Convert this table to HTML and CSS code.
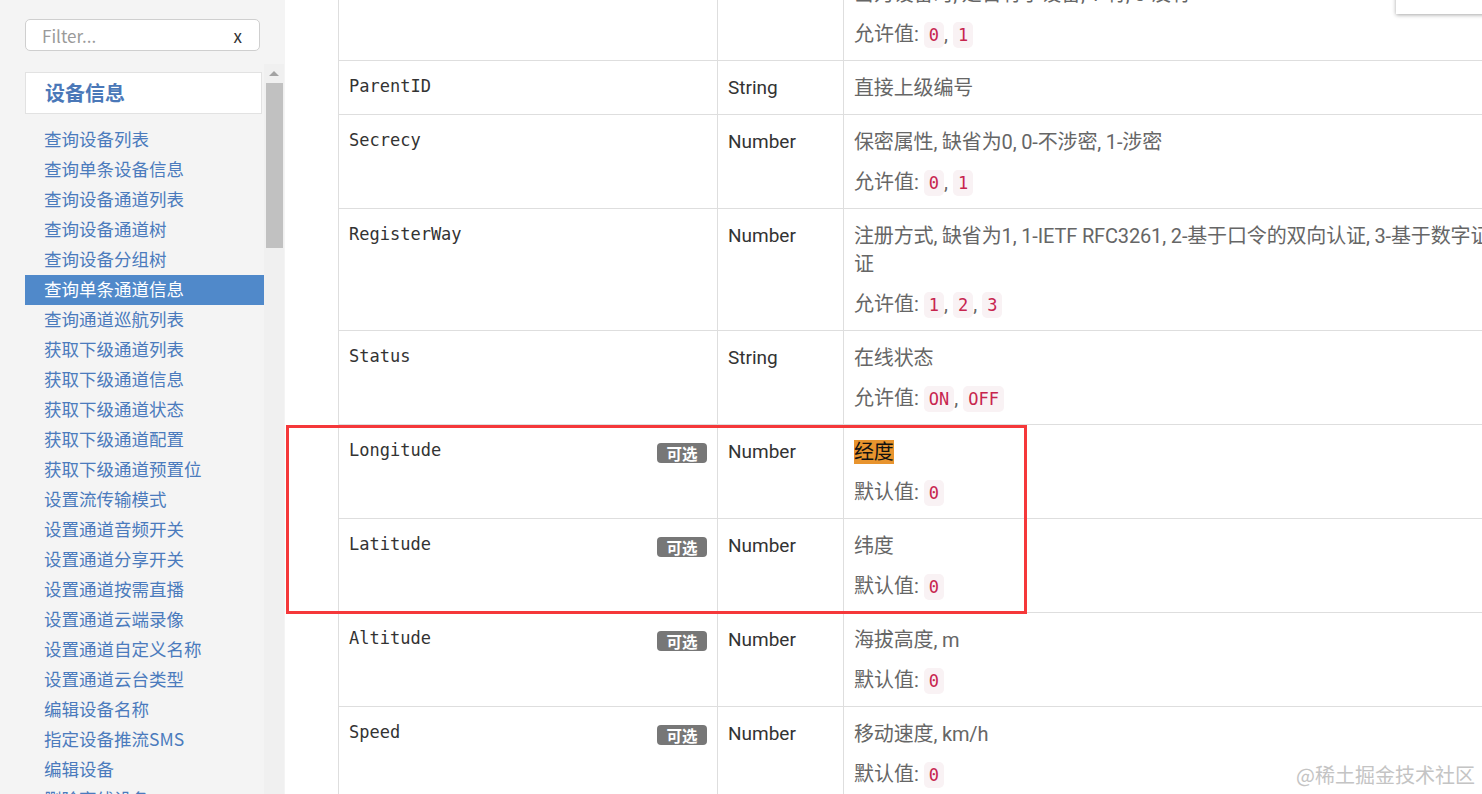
FILE: index.html
```html
<!DOCTYPE html>
<html lang="zh-CN">
<head>
<meta charset="utf-8">
<title>API 文档 - 设备信息</title>
<link rel="stylesheet" href="styles.css">
</head>
<body>
<div class="page">
  <aside class="sidebar">
    <div class="filter">
      <span class="filter-ph">Filter...</span>
      <span class="filter-x">x</span>
    </div>
    <div class="nav-wrap">
      <nav class="nav">
        <div class="nav-header">设备信息</div>
        <ul class="nav-list">
          <li><a>查询设备列表</a></li>
          <li><a>查询单条设备信息</a></li>
          <li><a>查询设备通道列表</a></li>
          <li><a>查询设备通道树</a></li>
          <li><a>查询设备分组树</a></li>
          <li class="active"><a>查询单条通道信息</a></li>
          <li><a>查询通道巡航列表</a></li>
          <li><a>获取下级通道列表</a></li>
          <li><a>获取下级通道信息</a></li>
          <li><a>获取下级通道状态</a></li>
          <li><a>获取下级通道配置</a></li>
          <li><a>获取下级通道预置位</a></li>
          <li><a>设置流传输模式</a></li>
          <li><a>设置通道音频开关</a></li>
          <li><a>设置通道分享开关</a></li>
          <li><a>设置通道按需直播</a></li>
          <li><a>设置通道云端录像</a></li>
          <li><a>设置通道自定义名称</a></li>
          <li><a>设置通道云台类型</a></li>
          <li><a>编辑设备名称</a></li>
          <li><a>指定设备推流SMS</a></li>
          <li><a>编辑设备</a></li>
          <li><a>删除离线设备</a></li>
        </ul>
      </nav>
      <div class="scrollbar">
        <div class="sb-up"><span class="sb-arrow"></span></div>
        <div class="sb-thumb"></div>
      </div>
    </div>
  </aside>

  <main class="content">
    <table class="params">
      <colgroup>
        <col class="c-name">
        <col class="c-type">
        <col class="c-desc">
      </colgroup>
      <tbody>
        <tr>
          <td><div class="field">Parental</div></td>
          <td class="type">Number</td>
          <td><p class="desc">当为设备时, 是否有子设备, 1-有, 0-没有</p><p class="allowed">允许值: <code>0</code>, <code>1</code></p></td>
        </tr>
        <tr>
          <td><div class="field">ParentID</div></td>
          <td class="type">String</td>
          <td><p class="desc">直接上级编号</p></td>
        </tr>
        <tr>
          <td><div class="field">Secrecy</div></td>
          <td class="type">Number</td>
          <td><p class="desc">保密属性, 缺省为0, 0-不涉密, 1-涉密</p><p class="allowed">允许值: <code>0</code>, <code>1</code></p></td>
        </tr>
        <tr>
          <td><div class="field">RegisterWay</div></td>
          <td class="type">Number</td>
          <td><p class="desc">注册方式, 缺省为1, 1-IETF RFC3261, 2-基于口令的双向认证, 3-基于数字证书的双向认<br>证</p><p class="allowed">允许值: <code>1</code>, <code>2</code>, <code>3</code></p></td>
        </tr>
        <tr>
          <td><div class="field">Status</div></td>
          <td class="type">String</td>
          <td><p class="desc">在线状态</p><p class="allowed">允许值: <code>ON</code>, <code>OFF</code></p></td>
        </tr>
        <tr>
          <td><span class="badge">可选</span><div class="field">Longitude</div></td>
          <td class="type">Number</td>
          <td><p class="desc"><span class="mark">经度</span></p><p class="allowed">默认值: <code>0</code></p></td>
        </tr>
        <tr>
          <td><span class="badge">可选</span><div class="field">Latitude</div></td>
          <td class="type">Number</td>
          <td><p class="desc">纬度</p><p class="allowed">默认值: <code>0</code></p></td>
        </tr>
        <tr>
          <td><span class="badge">可选</span><div class="field">Altitude</div></td>
          <td class="type">Number</td>
          <td><p class="desc">海拔高度, m</p><p class="allowed">默认值: <code>0</code></p></td>
        </tr>
        <tr>
          <td><span class="badge">可选</span><div class="field">Speed</div></td>
          <td class="type">Number</td>
          <td><p class="desc">移动速度, km/h</p><p class="allowed">默认值: <code>0</code></p></td>
        </tr>
      </tbody>
    </table>
    <div class="popup"></div>
    <div class="red-box"></div>
  </main>

  <div class="watermark">@稀土掘金技术社区</div>
</div>
</body>
</html>
```

FILE: styles.css
```css
html, body {
  margin: 0;
  padding: 0;
  overflow: hidden;
  background: #fff;
}

body {
  font-family: "Noto Sans CJK SC", "Noto Sans", sans-serif;
  color: #333;
}

.page {
  position: relative;
  display: flex;
  width: 1482px;
  height: 794px;
  overflow: hidden;
}

/* ---------- sidebar ---------- */
.sidebar {
  flex: 0 0 285px;
  height: 794px;
  background: #f4f4f4;
  overflow: hidden;
}

.filter {
  box-sizing: border-box;
  margin: 19px 0 0 25px;
  width: 235px;
  height: 32px;
  padding: 0 17px 0 16px;
  border: 1px solid #cfcfcf;
  border-radius: 5px;
  background: #fff;
  display: flex;
  align-items: center;
  justify-content: space-between;
  font-size: 17px;
}

.filter-ph {
  color: #9a9a9a;
}

.filter-x {
  color: #333;
}

.nav-wrap {
  margin-top: 13px;
  padding-left: 25px;
  display: flex;
  align-items: flex-start;
}

.nav {
  width: 239px;
  padding-top: 8px;
}

.nav-header {
  box-sizing: border-box;
  width: 237px;
  height: 42px;
  border: 1px solid #e2e2e2;
  background: #fff;
  padding-left: 19px;
  font-size: 20px;
  font-weight: 700;
  line-height: 40px;
  color: #4a78b8;
}

.nav-list {
  list-style: none;
  margin: 11px 0 0;
  padding: 0;
}

.nav-list a {
  display: block;
  height: 30px;
  line-height: 27px;
  padding-left: 19px;
  font-size: 17.5px;
  color: #4b7bbd;
  white-space: nowrap;
}

.nav-list .active a {
  background: #5089ca;
  color: #fff;
}

.scrollbar {
  width: 20px;
  height: 740px;
  background: #f0f0f0;
}

.sb-up {
  height: 19px;
  display: flex;
  justify-content: center;
  align-items: center;
}

.sb-arrow {
  width: 0;
  height: 0;
  border-left: 5px solid transparent;
  border-right: 5px solid transparent;
  border-bottom: 5px solid #a3a3a3;
}

.sb-thumb {
  height: 165px;
  margin: 0 1px 0 2px;
  background: #c1c1c1;
}

/* ---------- content ---------- */
.content {
  position: relative;
  flex: 1 1 auto;
  height: 794px;
  overflow: hidden;
  background: #fff;
}

.params {
  margin: -34px 0 0 53px;
  border-collapse: collapse;
  table-layout: fixed;
  width: 1305px;
  font-family: "Roboto", "Noto Sans CJK SC", sans-serif;
}

.c-name { width: 379px; }
.c-type { width: 126px; }
.c-desc { width: 800px; }

.params td {
  border: 1px solid #dedede;
  padding: 12.5px 10px;
  vertical-align: top;
  font-size: 20px;
  line-height: 28px;
}

.field {
  font-family: "DejaVu Sans Mono", "Liberation Mono", monospace;
  font-size: 17px;
  line-height: 24px;
  color: #333;
}

.badge {
  float: right;
  margin-top: 5.5px;
  width: 50px;
  height: 20px;
  line-height: 20px;
  border-radius: 4px;
  background: #777;
  color: #fff;
  font-family: "Noto Sans CJK SC", sans-serif;
  font-size: 15.5px;
  font-weight: 700;
  text-align: center;
}

.params td.type {
  color: #333;
  font-size: 19px;
}

.desc,
.allowed {
  margin: 0;
  color: #666;
}

.desc {
  letter-spacing: -0.15px;
}

.allowed {
  margin-top: 12px;
}

.allowed code {
  font-family: "DejaVu Sans Mono", "Liberation Mono", monospace;
  font-size: 17px;
  line-height: 1;
  padding: 3px 5px;
  border-radius: 5px;
  background: #f9f2f4;
  color: #c7254e;
}

.mark {
  display: inline-block;
  line-height: 24px;
  background: #e8942e;
  color: #111;
}

.popup {
  position: absolute;
  left: 1111px;
  top: -12px;
  width: 120px;
  height: 26px;
  background: #fff;
  box-shadow: 0 1px 4px rgba(0, 0, 0, 0.35);
}

.red-box {
  position: absolute;
  left: 1px;
  top: 425px;
  width: 741px;
  height: 189px;
  box-sizing: border-box;
  border: 3px solid #f5383a;
}

.watermark {
  position: absolute;
  right: 7px;
  bottom: 7px;
  font-size: 20px;
  line-height: 24px;
  color: #c4c4c4;
  white-space: nowrap;
}
```
